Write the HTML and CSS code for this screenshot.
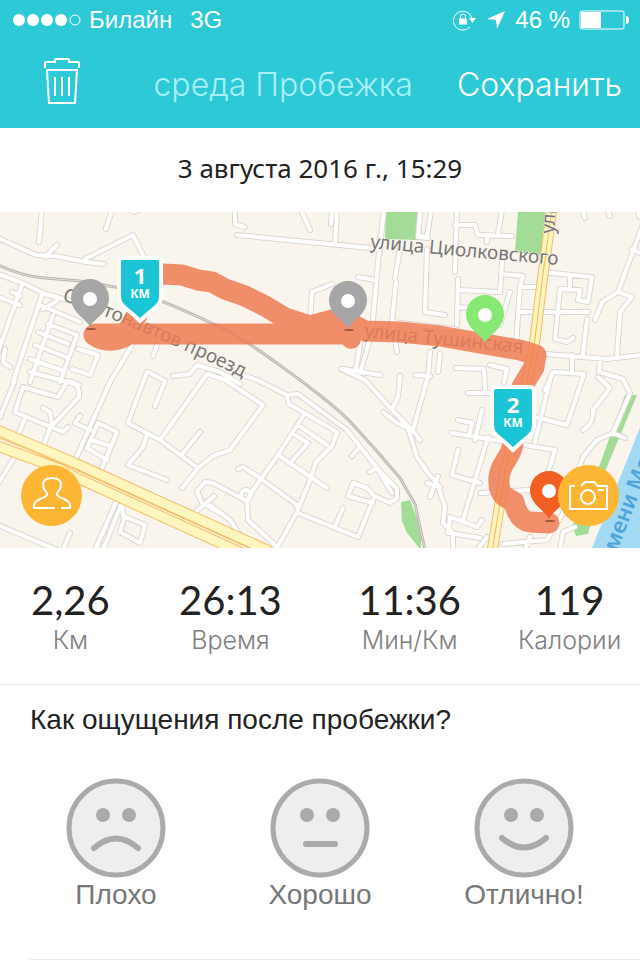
FILE: index.html
```html
<!DOCTYPE html>
<html lang="ru">
<head>
    <meta charset="UTF-8">
    <meta name="viewport" content="width=device-width, initial-scale=1.0">
    <title>среда Пробежка</title>
    <link rel="stylesheet" href="styles.css">
</head>
<body>
    <header>
        <div class="status">
            <svg class="signal" width="68" height="12" viewBox="0 0 68 12">
                <circle cx="6" cy="6" r="6"/>
                <circle cx="20" cy="6" r="6"/>
                <circle cx="34" cy="6" r="6"/>
                <circle cx="48" cy="6" r="6"/>
                <circle class="empty" cx="62" cy="6" r="5"/>
            </svg>
            <span>Билайн</span>
            <span class="network">3G</span>
            <div class="status-right">
                <svg width="25" height="22" viewBox="0 0 25 22">
                    <path class="line" d="M18 18A9.500 9.500 0 1 1 20 9"/>
                    <path d="M17 9h7l-3.500 5z"/>
                    <path d="M7 9.500h8v6H7z"/>
                    <path class="line" d="M8.500 10V7.500a2.500 2.500 0 0 1 5 0V10"/>
                </svg>
                <svg width="20" height="20" viewBox="0 0 20 20">
                    <path d="M19 1L1 9l9 1 1 9z"/>
                </svg>
                <span>46 %</span>
                <svg width="50" height="20" viewBox="0 0 50 20">
                    <rect class="line" x="1" y="1" width="44" height="18" rx="2"/>
                    <rect x="2" y="2" width="20" height="16"/>
                    <path d="M47 6q3 0 3 4t-3 4z"/>
                </svg>
            </div>
        </div>
        <nav>
            <button class="trash" type="button" aria-label="Удалить">
                <svg width="36" height="46" viewBox="0 0 36 46">
                    <path d="M1 10V5q0-1 1-1h9V2q0-1 1-1h12q1 0 1 1v2h9q1 0 1 1v5M3 12h30l-2 33H5zM11 19v19M18 19v19M25 19v19"/>
                </svg>
            </button>
            <h1>среда Пробежка</h1>
            <button class="save" type="button">Сохранить</button>
        </nav>
    </header>

    <p class="date">3 августа 2016 г., 15:29</p>

    <section class="map">
        <svg class="map-canvas" viewBox="0 0 640 336">
            <defs>
                <path id="streets" d="M42-2L39 30M112-2L106 17M139-2L134 0M-2 26L16 34 36 43 55 44 86 50 104 52M57 33L45 45M85 47L133 23 143 43
                    M-2 62L25 72 45 82 75 90M22 73L-2 140M-2 85L20 93M43 80L13 170M12 80L20 84M40 93L80 110M53 103L30 170M43 97L57 89M77 123L60 170M38 120L68 132M35 133L66 145M30 147L61 158M48 112L77 123M78 137L98 143 90 163 72 157M5 137L3 150 10 155M134 130L110 170M157 133L153 144M147 160L135 192M148 160L165 169 155 194M173 164L190 162 197 153 220 160 240 172
                    M15 168L0 205M23 175L15 200 63 220 68 215M23 175L58 185 67 170M30 160L79 173M67 169Q80 170 79 185L67 198 50 216 43 235M43 196L50 200 52 214M25 206L18 223M110 170L73 253M98 211L117 220 100 261M98 211L87 236 107 248M92 228L110 234M90 218L75 211 80 204
                    M135 192L128 211 160 228 198 256 182 276M207 162L160 228M200 220L183 241M147 223L143 235 128 253 167 268M198 256L213 244 230 238 263 193 225 168 208 162M-2 313L57 338M17 241L-2 272M70 321L63 338M117 288L95 338M122 290L103 338M122 288L123 304 145 313 140 331 120 320 125 304M192 303L214 284M220 301L202 291 197 279 205 270 213 271 245 288M210 293L230 308 242 326
                    M240 162L257 168 287 183 298 182 347 218 377 256 397 277 397 286 390 291 377 285M287 185L289 192 337 220 332 234 316 250 310 268 297 300 277 336M305 201L278 243 253 278 247 288M298 213L327 233M295 223L308 231 292 249M278 243L327 276M238 257L243 255 260 266 297 293 298 301 358 325 373 288M247 289L248 308 277 335M343 296L335 315M360 235L352 244M375 285L367 276 353 271 348 284 373 291M370 260L377 256 392 281
                    M341 157L365 168 392 198 412 218 420 228M400 164L398 185 392 197M428 164L413 218M383 200L397 211 408 216 417 245 428 261 437 271 445 295 443 311 453 321 453 338
                    M235-2L235 12 245 15M301-2L310 18M337-2L335 32M332-2L331 12M237 23L380 37M384-2L378 50 372 120 360 161M358 65L375 68M332 72L312 80 310 107M400 37L395 66M396 70L392 110 397 140M392 110L455 117M343 157L380 163M361 125L356 158M415 163L430 164M420 2L418 25 428 26
                    M457-2L455 60M458 67L457 113M431-2L427 25 418 24M455 13L475 13 478 23 512 24M487 23L487 30M502-2L498 22M427 37L425 100 445 103M502 50L500 80 458 78M502 62L523 64 520 75 540 75M510 80L500 113M520 75L516 133M457 95L470 96M518 100L542 100
                    M542 60L592 65 588 90 578 88 580 78 560 77 555 127 567 130 573 126M570 63L570 75M542 100L588 100M587 107L583 142M546 142L607 147 642 143M642 15L618 80 602 90 595 108M618 80L632 85 620 100 617 143M632 37L642 42M582-2L585 6M607-2L610 4M637-2L640 5M430 140L428 165M440 142L438 160M572 143L572 160M600 147L599 160 623 167 630 181M456 156L484 157 485 180M490 153L507 157 504 170
                    M468 181L490 181M482 198L475 228M458 208L472 211 469 224M452 221L555 238 542 281M458 238L452 263 480 271M488 225L463 308M550 168L535 230M535 205L567 213 584 162 553 160 545 178M583 218Q594 212 593 198L610 176 598 165M630 181L613 221 597 228 583 245 563 301 547 328 503 332M613 221L625 226M450 305L477 315 482 308M450 321L480 326M450 305L448 321M427 271L440 275M430 285L438 264M480 281L530 278 542 281M575 315L563 320 560 338M530 325L525 338M477 338L487 325"/>
                <path id="roundabout" d="M241 283a5 5 0 1 0 10 0a5 5 0 1 0-10 0"/>
                <path id="highway" d="M-5 217L75 251 267 338M-5 233L60 257 75 265 240 340"/>
                <path id="avenue" d="M552-4L542 70 534 135 525 180 515 220 505 260 492 340"/>
                <path id="railway" d="M-2 53C15 61 30 65 45 66L80 69 115 75C150 82 185 99 218 114C250 130 275 150 300 168C320 183 345 203 355 215L375 237 400 266 415 292 425 338"/>
                <path id="pin" d="M0 28C-3 20-19 14-19-1A19 19 0 0 1 19-1C19 14 3 20 0 28z"/>
                <path id="shield" d="M-17-32H17Q21-32 21-28V6Q21 12 17 16Q8 23 0 31Q-8 23-17 16Q-21 12-21 6V-28Q-21-32-17-32z"/>
            </defs>

            <rect class="land" width="640" height="336"/>
            <path class="park" d="M386-1h33l-2 29-32-1zM518-1h30l-5 45-28-4zM625 183h12L604 262l-16 60-12 2-4-10 20-40zM401 290l9-2 11 30v20l-14-17-5-12z"/>
            <path class="river" d="M641 213L592 336h49z"/>

            <use href="#railway" class="rail"/>
            <use href="#railway" class="rail-inner"/>

            <use href="#streets" class="casing"/>
            <use href="#roundabout" class="casing"/>
            <use href="#streets" class="street"/>
            <use href="#roundabout" class="street"/>
            <use href="#highway" class="major-casing"/>
            <use href="#avenue" class="major-casing"/>
            <use href="#highway" class="major"/>
            <use href="#avenue" class="major"/>
            <use href="#avenue" class="major-line"/>
            <path class="major-line" d="M-5 224L72 256 258 340"/>

            <!-- street names -->
            <path id="p1" class="guide" d="M62 88Q150 120 260 174"/>
            <path id="p2" class="guide" d="M370 36L580 55"/>
            <path id="p3" class="guide" d="M364 125L550 144"/>
            <path id="p4" class="guide" d="M554 22L558-40"/>
            <path id="p5" class="guide" d="M617 340L670 202"/>
            <text class="label"><textPath href="#p1">Стратонавтов проезд</textPath></text>
            <text class="label"><textPath href="#p2">улица Циолковского</textPath></text>
            <text class="label"><textPath href="#p3">улица Тушинская</textPath></text>
            <text class="label"><textPath href="#p4">улица</textPath></text>
            <text class="label water"><textPath href="#p5">мени Москвы</textPath></text>

            <!-- run track -->
            <g class="track">
                <path d="M137 103L141 65 163 62 182 63 198 68 212 70 225 77 245 84 265 94 285 106 310 114 340 106 365 119 400 120 440 124 485 132 520 138 536 143 534 155 522 175 514 225C512 248 500 250 499 265Q498 278 504 284L514 290Q518 308 530 310L549 311"/>
                <path d="M95 122H350"/>
                <path d="M94 123Q107 132 124 125L137 103"/>
                <circle cx="351" cy="127" r="10"/>
            </g>

            <ellipse class="shadow" cx="91" cy="117" rx="5" ry="1"/>
            <ellipse class="shadow" cx="349" cy="118" rx="5" ry="1"/>
            <ellipse class="shadow" cx="550" cy="309" rx="5" ry="1"/>
            <g transform="translate(90 87)"><use href="#pin" class="pin-pause"/><circle class="hole" r="7"/></g>
            <g transform="translate(348 89)"><use href="#pin" class="pin-pause"/><circle class="hole" r="7"/></g>
            <g transform="translate(485 103)"><use href="#pin" class="pin-start"/><circle class="hole" r="7"/></g>
            <g transform="translate(549 279)"><use href="#pin" class="pin-finish"/><circle class="hole" r="7"/></g>

            <g transform="translate(140 78)">
                <use href="#shield" class="shield"/>
                <text class="km-number" y="-6">1</text>
                <text class="km-unit" y="8">КМ</text>
            </g>
            <g transform="translate(513 207)">
                <use href="#shield" class="shield"/>
                <text class="km-number" y="-6">2</text>
                <text class="km-unit" y="8">КМ</text>
            </g>
        </svg>
        <button class="map-button friends" type="button" aria-label="Друзья">
            <svg width="61" height="61" viewBox="0 0 61 61">
                <path d="M34 43H13C12 38 15 36 19 34C24 32 27 31 26 28C25 26 22 25 22 20C22 15 26 13 31 13C36 13 40 15 40 20C40 25 37 26 36 28C35 31 38 32 43 34C47 36 50 38 49 43H40"/>
            </svg>
        </button>
        <button class="map-button camera" type="button" aria-label="Фото">
            <svg width="61" height="61" viewBox="0 0 61 61">
                <path d="M17 21h-5v23h37V21H40l-4-4h-9l-4 4M40 25h6"/>
                <circle cx="30" cy="32" r="7"/>
            </svg>
        </button>
    </section>

    <section class="stats">
        <div class="stat"><strong>2,26</strong><span>Км</span></div>
        <div class="stat"><strong>26:13</strong><span>Время</span></div>
        <div class="stat"><strong>11:36</strong><span>Мин/Км</span></div>
        <div class="stat"><strong>119</strong><span>Калории</span></div>
    </section>

    <section class="mood">
        <h2>Как ощущения после пробежки?</h2>
        <div class="faces">
            <button class="face" type="button">
                <svg width="100" height="100" viewBox="0 0 100 100">
                    <circle class="head" cx="50" cy="50" r="47"/>
                    <circle class="eye" cx="37" cy="37" r="7"/>
                    <circle class="eye" cx="63" cy="37" r="7"/>
                    <path d="M28 70Q50 51 72 70"/>
                </svg>
                <span>Плохо</span>
            </button>
            <button class="face" type="button">
                <svg width="100" height="100" viewBox="0 0 100 100">
                    <circle class="head" cx="50" cy="50" r="47"/>
                    <circle class="eye" cx="37" cy="37" r="7"/>
                    <circle class="eye" cx="63" cy="37" r="7"/>
                    <path d="M36 66H65"/>
                </svg>
                <span>Хорошо</span>
            </button>
            <button class="face" type="button">
                <svg width="100" height="100" viewBox="0 0 100 100">
                    <circle class="head" cx="50" cy="50" r="47"/>
                    <circle class="eye" cx="37" cy="37" r="7"/>
                    <circle class="eye" cx="63" cy="37" r="7"/>
                    <path d="M28 60Q50 79 72 60"/>
                </svg>
                <span>Отлично!</span>
            </button>
        </div>
    </section>
</body>
</html>
```
FILE: styles.css
```css
* {
	box-sizing: border-box;
}

body {
	font-family: "Liberation Sans", Arial, sans-serif;
	margin: 0;
	background: #fff;
	color: #222;
}

button {
	font: inherit;
	color: inherit;
	background: none;
	border: 0;
	padding: 0;
	cursor: pointer;
}

svg {
	display: block;
}

header {
	background: #2dc9d7;
	color: #fff;
}

.status {
	display: flex;
	align-items: center;
	height: 40px;
	padding: 0 11px 0 13px;
	font-size: 24px;
}

.status svg {
	fill: #fff;
}

.status .line,
.status .empty {
	fill: none;
	stroke: #fff;
	stroke-width: 1;
}

.signal {
	margin-right: 8px;
}

.network {
	margin-left: 18px;
}

.status-right {
	display: flex;
	align-items: center;
	gap: 9px;
	margin-left: auto;
}

nav {
	display: flex;
	align-items: center;
	height: 88px;
	padding: 0 18px 0 44px;
	font-family: Inter, sans-serif;
	font-size: 32px;
	font-weight: 300;
}

.trash {
	margin-bottom: 6px;
}

.trash svg {
	fill: none;
	stroke: #fff;
	stroke-width: 2;
}

h1 {
	margin: 0 44px 0 auto;
	font-size: 32px;
	font-weight: 300;
	color: #a8f0f5;
}

.date {
	margin: 0;
	padding: 22px 0 26px;
	font-family: "Noto Sans", sans-serif;
	font-size: 26px;
	line-height: 36px;
	text-align: center;
}

/* Map */
.map {
	position: relative;
}

.map-canvas {
	width: 100%;
	height: auto;
	overflow: hidden;
}

.land {
	fill: #f9f5ed;
}

.park {
	fill: #a3dc96;
}

.river {
	fill: #a3daf3;
}

.casing,
.street,
.rail,
.rail-inner,
.major,
.major-casing,
.major-line {
	fill: none;
	stroke-linecap: round;
	stroke-linejoin: round;
}

.casing {
	stroke: #dcd8d1;
	stroke-width: 6;
}

.street {
	stroke: #fff;
	stroke-width: 4;
}

.rail {
	stroke: #b9b7b2;
	stroke-width: 3;
}

.rail-inner {
	stroke: #dedcd6;
	stroke-width: 1;
}

.major-casing {
	stroke: #f5bd62;
	stroke-width: 11;
}

.major {
	stroke: #fff5bf;
	stroke-width: 9;
}

.major-line {
	stroke: #f7b850;
	stroke-width: 1;
}

.guide {
	fill: none;
}

.label {
	font-family: "Noto Sans", sans-serif;
	font-size: 19px;
	fill: #777;
	stroke: #f9f5ed;
	stroke-width: 1;
	paint-order: stroke;
}

.water {
	font-size: 22px;
	font-weight: 600;
	fill: #4fa5d8;
	stroke: none;
}

.track {
	opacity: 0.84;
}

.track path {
	fill: none;
	stroke: #ef7b52;
	stroke-width: 21;
	stroke-linecap: round;
	stroke-linejoin: round;
}

.track circle {
	fill: #ef7b52;
}

.shadow {
	fill: #a0533a;
}

.pin-pause {
	fill: #a6a6a6;
}

.pin-start {
	fill: #88e874;
}

.pin-finish {
	fill: #f15f22;
}

.hole {
	fill: #fff;
}

.shield {
	fill: #1cc5d5;
	stroke: #fff;
	stroke-width: 4;
}

.km-number,
.km-unit {
	font-family: "Noto Sans", sans-serif;
	font-weight: 700;
	fill: #fff;
	text-anchor: middle;
}

.km-number {
	font-size: 22px;
}

.km-unit {
	font-size: 12px;
}

.map-button {
	position: absolute;
	bottom: 22px;
	border-radius: 50%;
	background: #fdb634;
}

.map-button svg {
	fill: none;
	stroke: #fff;
	stroke-width: 2;
}

.friends {
	left: 21px;
}

.camera {
	right: 21px;
}

/* Run totals */
.stats {
	display: grid;
	grid-template-columns: 11fr 14fr 14fr 11fr;
	padding: 28px 0;
	border-bottom: 1px solid #e8e8e8;
}

.stat {
	display: flex;
	flex-direction: column;
	align-items: center;
}

.stat strong {
	font-family: Lato, sans-serif;
	font-size: 40px;
	font-weight: 400;
	line-height: 48px;
}

.stat span {
	font-family: Inter, sans-serif;
	font-size: 25px;
	font-weight: 300;
	line-height: 32px;
	color: #808080;
}

/* Mood */
.mood {
	margin-left: 30px;
	padding-bottom: 47px;
	border-bottom: 1px solid #e8e8e8;
}

.mood h2 {
	margin: 0;
	padding: 18px 0 41px;
	font-size: 28px;
	font-weight: 400;
	line-height: 34px;
}

.faces {
	display: grid;
	grid-template-columns: 1fr 1fr 1fr;
	margin: 0 14px 0 -16px;
}

.face {
	display: flex;
	flex-direction: column;
	align-items: center;
	font-size: 28px;
	line-height: 34px;
	color: #777;
}

.face svg {
	fill: none;
	stroke: #aaa;
	stroke-width: 6;
	stroke-linecap: round;
}

.face .head {
	fill: #eee;
	stroke-width: 5;
}

.face .eye {
	fill: #aaa;
	stroke: none;
}
```
